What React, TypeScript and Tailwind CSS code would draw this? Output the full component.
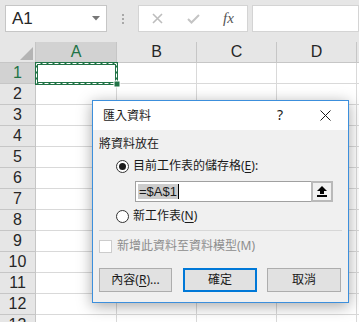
import React from "react";

const rows = [1, 2, 3, 4, 5, 6, 7, 8, 9, 10, 11, 12, 13];
const cols = ["A", "B", "C", "D"];

function U({ children }: { children: React.ReactNode }) {
  return <span className="underline underline-offset-2">{children}</span>;
}

function Radio({ checked }: { checked?: boolean }) {
  return (
    <div className="w-[13px] h-[13px] rounded-full border border-[#333333] bg-white flex items-center justify-center shrink-0">
      {checked && <div className="w-[7px] h-[7px] rounded-full bg-[#1a1a1a]" />}
    </div>
  );
}

export default function App() {
  return (
    <div className="relative w-[359px] h-[322px] overflow-hidden bg-white font-['Liberation_Sans',sans-serif]">
      {/* formula bar */}
      <div className="h-[42px] bg-[#e6e6e6] flex items-start pt-[5px] pl-[5px]">
        <div className="w-[102px] h-[27px] bg-white border border-[#c6c6c6] flex items-center justify-between pl-[6px] pr-[6px]">
          <span className="text-[17px] text-[#262626] leading-none">A1</span>
          <svg width="8" height="5" viewBox="0 0 8 5">
            <polygon points="0,0 8,0 4,4.5" fill="#777777" />
          </svg>
        </div>
        <div className="w-[31px] h-[27px] flex flex-col items-center justify-center gap-[2px]">
          <div className="w-[2px] h-[2px] bg-[#a8a8a8]" />
          <div className="w-[2px] h-[2px] bg-[#a8a8a8]" />
          <div className="w-[2px] h-[2px] bg-[#a8a8a8]" />
        </div>
        <div className="w-[110px] h-[27px] bg-white border border-[#d4d4d4] flex items-center">
          <div className="w-[37px] flex justify-center">
            <svg width="11" height="11" viewBox="0 0 11 11">
              <path d="M1 1 L10 10 M10 1 L1 10" stroke="#bdbdbd" strokeWidth="1.6" />
            </svg>
          </div>
          <div className="w-[34px] flex justify-center">
            <svg width="13" height="10" viewBox="0 0 13 10">
              <path d="M1 5 L4.5 8.5 L12 1" stroke="#c4c4c4" strokeWidth="2" fill="none" />
            </svg>
          </div>
          <div className="w-[37px] flex justify-center">
            <span className="font-['Liberation_Serif',serif] italic text-[15px] text-[#555555] leading-none">fx</span>
          </div>
        </div>
        <div className="ml-[4px] flex-1 h-[27px] bg-white border border-[#d4d4d4]" />
      </div>

      {/* column header */}
      <div className="flex h-[21px]">
        <div className="relative w-[36px] h-full bg-[#e6e6e6] border-r border-b border-[#c6c6c6] shrink-0">
          <svg className="absolute left-[20px] top-[5px]" width="14" height="14" viewBox="0 0 14 14">
            <polygon points="13,0 13,13 0,13" fill="#b4b4b4" />
          </svg>
        </div>
        {cols.map((c) => (
          <div
            key={c}
            className={`${c === "A" ? "w-[81px] bg-[#d2d2d2] text-[#217346]" : "w-[80px] bg-[#e6e6e6] text-[#262626]"} h-full border-r border-b border-[#c6c6c6] shrink-0 flex items-center justify-center text-[16px]`}
          >
            {c}
          </div>
        ))}
        <div className="flex-1 h-full bg-[#e6e6e6] border-b border-[#c6c6c6]" />
      </div>

      {/* rows */}
      {rows.map((r) => (
        <div key={r} className="flex h-[21px]">
          <div
            className={`${r === 1 ? "bg-[#d2d2d2] text-[#217346]" : "bg-[#e6e6e6] text-[#262626]"} w-[36px] h-full border-r border-b border-[#c6c6c6] shrink-0 flex items-center justify-center text-[16px]`}
          >
            {r}
          </div>
          {cols.map((c) => (
            <div
              key={c}
              className={`${c === "A" ? "w-[81px]" : "w-[80px]"} h-full border-r border-b border-[#d9d9d9] shrink-0`}
            />
          ))}
          <div className="flex-1 h-full border-b border-[#d9d9d9]" />
        </div>
      ))}

      {/* selection marquee A1 */}
      <svg className="absolute left-[34px] top-[61px]" width="87" height="27" viewBox="0 0 87 27">
        <rect x="2.5" y="2.5" width="80" height="20" fill="none" stroke="#217346" strokeWidth="3" />
        <rect x="2.5" y="2.5" width="80" height="20" fill="none" stroke="#ffffff" strokeWidth="1" strokeDasharray="4 2" />
        <rect x="80" y="20" width="6" height="6" fill="#217346" stroke="#ffffff" strokeWidth="1" />
      </svg>

      {/* dialog */}
      <div className="absolute left-[92px] top-[100px] w-[257px] h-[203px] border border-[#3c8fdc] bg-[#f0f0f0] shadow-[0_3px_14px_rgba(0,0,0,0.35)] flex flex-col font-['Noto_Sans','Noto_Sans_CJK_TC',sans-serif] text-[12px] text-[#1a1a1a]">
        <div className="relative h-[29px] bg-white shrink-0 flex items-center pl-[10px]">
          <span className="leading-[16px]">匯入資料</span>
          <span className="absolute left-[184px] top-[6px] text-[14px] leading-[16px] text-[#1a1a1a]">?</span>
          <svg className="absolute left-[227px] top-[9px]" width="11" height="11" viewBox="0 0 11 11">
            <path d="M0.5 0.5 L10.5 10.5 M10.5 0.5 L0.5 10.5" stroke="#1a1a1a" strokeWidth="1" />
          </svg>
        </div>
        <div className="flex flex-col pt-[6px] px-[6px]">
          <div className="h-[16px] leading-[16px]">將資料放在</div>
          <div className="mt-[6px] h-[16px] flex items-center pl-[17px] gap-[4px]">
            <Radio checked />
            <span className="leading-[16px]">
              目前工作表的儲存格(<U>E</U>):
            </span>
          </div>
          <div className="mt-[7px] ml-[36px] w-[198px] h-[21px] bg-white border border-[#a0a0a0] flex items-stretch">
            <div className="flex-1 flex items-center pl-[2px]">
              <span className="bg-[#cccccc] text-[13px] leading-[15px] px-[1px] font-['Liberation_Sans',sans-serif]">=$A$1</span>
              <div className="w-[1px] h-[15px] bg-[#000000]" />
            </div>
            <div className="w-[22px] bg-[#f0f0f0] border-2 border-[#b9b9b9] flex items-center justify-center -my-px -mr-px">
              <svg width="10" height="11" viewBox="0 0 10 11">
                <polygon points="5,0 10,5 0,5" fill="#000" />
                <rect x="3" y="5" width="4" height="3" fill="#000" />
                <rect x="0" y="9" width="10" height="2" fill="#000" />
              </svg>
            </div>
          </div>
          <div className="mt-[6px] h-[16px] flex items-center pl-[17px] gap-[4px]">
            <Radio />
            <span className="leading-[16px]">
              新工作表(<U>N</U>)
            </span>
          </div>
          <div className="mt-[6px] h-px bg-[#d7d7d7] w-[243px]" />
          <div className="mt-[7px] h-[16px] flex items-center gap-[5px]">
            <div className="w-[13px] h-[13px] bg-white border border-[#cccccc] shrink-0" />
            <span className="leading-[16px] text-[#8d8d8d]">新增此資料至資料模型(M)</span>
          </div>
          <div className="mt-[14px] flex">
            <div className="w-[73px] h-[24px] bg-[#e1e1e1] border border-[#adadad] flex items-center justify-center leading-[16px]">
              內容(<U>R</U>)...
            </div>
            <div className="ml-[11px] w-[74px] h-[24px] bg-[#e1e1e1] border-2 border-[#0078d7] flex items-center justify-center leading-[16px]">
              確定
            </div>
            <div className="ml-[10px] w-[74px] h-[24px] bg-[#e1e1e1] border border-[#adadad] flex items-center justify-center leading-[16px]">
              取消
            </div>
          </div>
        </div>
      </div>
    </div>
  );
}
